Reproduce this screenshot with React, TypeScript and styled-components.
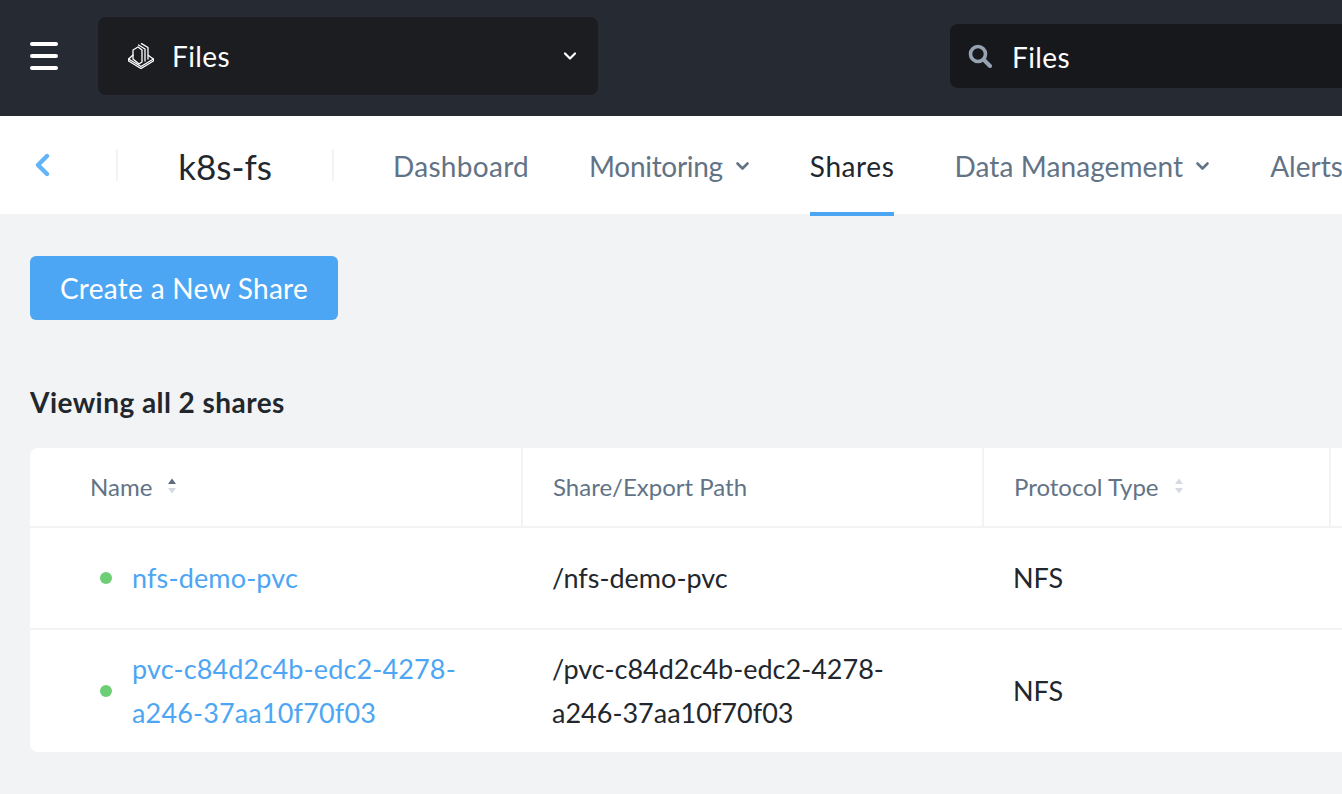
import React from "react";
import styled, { createGlobalStyle } from "styled-components";

const GlobalStyle = createGlobalStyle`
  html, body {
    margin: 0;
    padding: 0;
    width: 1342px;
    height: 794px;
    overflow: hidden;
    background: #f2f3f5;
    font-family: Lato, "Open Sans", sans-serif;
  }
  * { box-sizing: border-box; }
`;

const Page = styled.div`
  width: 1342px;
  height: 794px;
  overflow: hidden;
  background: #f2f3f5;
`;

const TopBar = styled.header`
  height: 116px;
  background: #262a33;
  display: flex;
  align-items: center;
  padding-left: 30px;
`;

const Burger = styled.div`
  width: 28px;
  flex-shrink: 0;
  display: flex;
  flex-direction: column;
  row-gap: 8px;
  margin-right: 40px;
  margin-top: -4px;

  span {
    height: 4px;
    border-radius: 2px;
    background: #fff;
  }
`;

const AppSelect = styled.div`
  width: 500px;
  height: 78px;
  flex-shrink: 0;
  margin-top: -4px;
  background: #1b1d21;
  border-radius: 8px;
  display: flex;
  align-items: center;
  padding: 0 21px 0 30px;
  color: #fff;
  font-size: 28px;
  letter-spacing: 0.4px;
`;

const SelectLabel = styled.span`
  margin-left: 18px;
  flex: 1;
`;

const SearchBox = styled.div`
  width: 440px;
  height: 64px;
  margin-left: 352px;
  margin-top: -4px;
  flex-shrink: 0;
  background: #17181c;
  border-radius: 8px 0 0 8px;
  display: flex;
  align-items: center;
  padding-left: 18px;
  color: #fff;
  font-size: 28px;
  letter-spacing: 0.4px;
`;

const SearchLabel = styled.span`
  margin-left: 20px;
  padding-top: 2px;
`;

const NavBar = styled.nav`
  height: 98px;
  background: #fff;
  display: flex;
  align-items: flex-start;
`;

const BackCell = styled.div`
  width: 116px;
  height: 98px;
  padding-left: 34px;
  display: flex;
  align-items: center;
  flex-shrink: 0;
`;

const Divider = styled.div`
  width: 2px;
  height: 32px;
  margin-top: 33px;
  background: #f2f3f5;
  flex-shrink: 0;
`;

const EntityName = styled.div`
  width: 214px;
  text-align: center;
  font-size: 35px;
  line-height: 100px;
  color: #22272e;
  flex-shrink: 0;
`;

const Tabs = styled.div`
  display: flex;
  column-gap: 60px;
  padding-left: 59px;
`;

const Tab = styled.div<{ $active?: boolean; $tracking: number }>`
  display: flex;
  align-items: center;
  column-gap: 12px;
  height: 100px;
  padding-top: 4px;
  font-size: 28px;
  letter-spacing: ${(p) => p.$tracking}px;
  white-space: nowrap;
  color: ${(p) => (p.$active ? "#22272e" : "#627386")};
  border-bottom: 4px solid ${(p) => (p.$active ? "#4da6f3" : "transparent")};
`;

const Content = styled.main`
  padding: 42px 0 0 30px;
`;

const PrimaryButton = styled.button`
  display: block;
  width: 308px;
  height: 64px;
  border: 0;
  border-radius: 6px;
  background: #4da6f3;
  color: #fff;
  font-family: inherit;
  font-size: 28px;
  letter-spacing: 0.3px;
`;

const Summary = styled.h2`
  margin: 64px 0 28px;
  font-size: 28px;
  line-height: 36px;
  font-weight: 700;
  letter-spacing: 0.45px;
  color: #22272e;
`;

const Table = styled.div`
  width: 1400px;
  background: #fff;
  border-radius: 8px 0 0 8px;
`;

const Row = styled.div<{ $height: number; $last?: boolean }>`
  display: grid;
  grid-template-columns: 493px 461px 347px 100px;
  height: ${(p) => p.$height}px;
  border-bottom: ${(p) => (p.$last ? "0" : "2px solid #f2f3f5")};
`;

const HeadCell = styled.div<{ $first?: boolean }>`
  display: flex;
  align-items: center;
  column-gap: 16px;
  padding-left: ${(p) => (p.$first ? "60px" : "30px")};
  padding-bottom: 2px;
  border-right: 2px solid #f2f3f5;
  font-size: 24px;
  color: #627386;
`;

const Cell = styled.div`
  display: flex;
  align-items: center;
  padding-left: 29px;
  font-size: 27px;
  line-height: 44px;
  color: #22272e;
`;

const NameCell = styled(Cell)`
  padding-left: 70px;
  column-gap: 20px;
`;

const StatusDot = styled.span`
  width: 12px;
  height: 12px;
  border-radius: 50%;
  background: #6ccf76;
  flex-shrink: 0;
`;

const ShareLink = styled.a`
  color: #4da6f3;
  width: 340px;
  letter-spacing: 0.15px;
`;

const ChevronDown = () => (
  <svg width="15" height="10" viewBox="0 0 15 10" fill="none">
    <path d="M2.5 2.5 7.5 7.5 12.5 2.5" stroke="#627386" strokeWidth="2.6" strokeLinecap="round" strokeLinejoin="round" />
  </svg>
);

const SortIcon: React.FC<{ active?: boolean }> = ({ active }) => (
  <svg width="8" height="16" viewBox="0 0 8 16">
    <path d="M4 .5 8 6H0Z" fill={active ? "#5d6b80" : "#d5d9e0"} />
    <path d="M4 15.5 8 10H0Z" fill="#d5d9e0" />
  </svg>
);

const FilesIcon = () => (
  <svg width="26" height="26" viewBox="0 0 26 26" fill="none" stroke="#fff" strokeWidth="1.3" strokeLinejoin="round" strokeLinecap="round">
    <path d="M5 12 .6 16 13 23.5 25.4 16 20.5 12.5" />
    <path d="M.6 16V18L13 25.5 25.4 18V16" />
    <path d="M5 7 10 4 14 7V19L11 21 5 16Z" />
    <path d="M10.5 2 17 6V18" />
    <path d="M13.5 .6 20 4.5V16" />
  </svg>
);

const SearchIcon = () => (
  <svg width="24" height="24" viewBox="0 0 24 24" fill="none" stroke="#96a3b3" strokeLinecap="round">
    <circle cx="10" cy="10" r="7.5" strokeWidth="3.6" />
    <path d="M16 16 22 22" strokeWidth="4" />
  </svg>
);

const BackIcon = () => (
  <svg width="16" height="24" viewBox="0 0 16 24" fill="none">
    <path d="M13 3 4 12 13 21" stroke="#62b4f8" strokeWidth="4.4" strokeLinecap="round" strokeLinejoin="round" />
  </svg>
);

const App: React.FC = () => (
  <Page>
    <GlobalStyle />
    <TopBar>
      <Burger>
        <span />
        <span />
        <span />
      </Burger>
      <AppSelect>
        <FilesIcon />
        <SelectLabel>Files</SelectLabel>
        <svg width="14" height="10" viewBox="0 0 14 10" fill="none">
          <path d="M2 2.5 7 7.5 12 2.5" stroke="#fff" strokeWidth="2.2" strokeLinecap="round" strokeLinejoin="round" />
        </svg>
      </AppSelect>
      <SearchBox>
        <SearchIcon />
        <SearchLabel>Files</SearchLabel>
      </SearchBox>
    </TopBar>
    <NavBar>
      <BackCell>
        <BackIcon />
      </BackCell>
      <Divider />
      <EntityName>k8s-fs</EntityName>
      <Divider />
      <Tabs>
        <Tab $tracking={0.3}>Dashboard</Tab>
        <Tab $tracking={-0.3}>
          Monitoring <ChevronDown />
        </Tab>
        <Tab $tracking={0.6} $active>
          Shares
        </Tab>
        <Tab $tracking={0.1}>
          Data Management <ChevronDown />
        </Tab>
        <Tab $tracking={0}>Alerts</Tab>
      </Tabs>
    </NavBar>
    <Content>
      <PrimaryButton>Create a New Share</PrimaryButton>
      <Summary>Viewing all 2 shares</Summary>
      <Table>
        <Row $height={80}>
          <HeadCell $first>
            Name <SortIcon active />
          </HeadCell>
          <HeadCell>Share/Export Path</HeadCell>
          <HeadCell>
            Protocol Type <SortIcon />
          </HeadCell>
          <HeadCell />
        </Row>
        <Row $height={102}>
          <NameCell>
            <StatusDot />
            <ShareLink>nfs-demo-pvc</ShareLink>
          </NameCell>
          <Cell>/nfs-demo-pvc</Cell>
          <Cell>NFS</Cell>
          <Cell />
        </Row>
        <Row $height={122} $last>
          <NameCell>
            <StatusDot />
            <ShareLink>pvc-c84d2c4b-edc2-4278-a246-37aa10f70f03</ShareLink>
          </NameCell>
          <Cell>
            /pvc-c84d2c4b-edc2-4278-
            <br />
            a246-37aa10f70f03
          </Cell>
          <Cell>NFS</Cell>
          <Cell />
        </Row>
      </Table>
    </Content>
  </Page>
);

export default App;
